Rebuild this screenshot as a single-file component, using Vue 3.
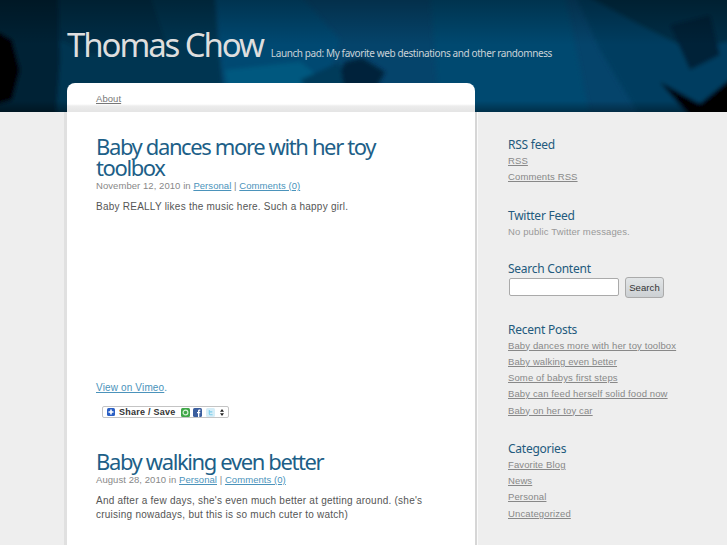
<template>
  <div class="page">
    <header class="masthead">
      <svg class="masthead-art" viewBox="0 0 727 112" preserveAspectRatio="none" aria-hidden="true">
        <defs>
          <linearGradient id="shade" x1="0" y1="0" x2="0" y2="1">
            <stop offset="0" stop-color="#000" stop-opacity="0.3" />
            <stop offset="0.4" stop-color="#000" stop-opacity="0" />
            <stop offset="0.9" stop-color="#000" stop-opacity="0" />
            <stop offset="1" stop-color="#000" stop-opacity="0.35" />
          </linearGradient>
          <filter id="soft" x="-5%" y="-5%" width="110%" height="110%">
            <feGaussianBlur stdDeviation="2" />
          </filter>
        </defs>
        <rect width="727" height="112" fill="#05446b" />
        <g filter="url(#soft)">
          <polygon points="-5,-5 215,-5 218,40 225,112 -5,117" fill="#043451" />
          <polygon points="55,-5 150,-5 165,40 90,55 60,40" fill="#032d47" />
          <polygon points="-5,-5 58,-5 60,60 56,117 -5,117" fill="#022335" />
          <polygon points="-5,30 12,40 20,70 12,100 -5,105" fill="#000" />
          <polygon points="215,-5 300,-5 340,40 325,85 225,90" fill="#054a72" />
          <polygon points="225,70 300,62 330,85 300,100 230,100" fill="#06587f" />
          <polygon points="345,62 362,58 385,72 372,95 340,112 330,90" fill="#02223a" />
          <polygon points="300,80 340,62 345,95 320,105" fill="#043a5a" />
          <polygon points="430,-5 565,-5 590,117 440,117" fill="#05486f" />
          <polygon points="575,-5 735,-5 735,117 640,117 600,50" fill="#043d60" />
          <polygon points="585,-5 735,-5 735,40 690,50 640,25" fill="#032d47" />
          <polygon points="670,25 710,15 720,55 690,70" fill="#032438" />
          <polygon points="660,82 700,104 735,85 735,117 690,117" fill="#000" />
          <polygon points="690,112 735,75 735,117" fill="#000" />
        </g>
        <rect width="727" height="112" fill="url(#shade)" />
      </svg>
      <div class="brand">
        <h1 class="site-name">Thomas Chow</h1>
        <span class="tagline">Launch pad: My favorite web destinations and other randomness</span>
      </div>
      <nav class="tabs">
        <a href="#" class="tab-link">About</a>
      </nav>
    </header>

    <div class="body-row">
      <main class="content">
        <article v-for="post in posts" :key="post.title" class="post">
          <h2 class="post-title">{{ post.title }}</h2>
          <p class="post-meta">
            {{ post.date }} in <a href="#">Personal</a> | <a href="#">Comments (0)</a>
          </p>
          <p class="post-text">{{ post.text }}</p>
          <template v-if="post.video">
            <div class="video-space"></div>
            <p class="vimeo"><a href="#">View on Vimeo</a>.</p>
            <div class="share">
              <svg class="share-plus" width="8" height="8" viewBox="0 0 8 8">
                <rect width="8" height="8" rx="1.500" fill="#2b5fc4" />
                <path d="M4 1.500v5M1.500 4h5" stroke="#fff" stroke-width="1.600" />
              </svg>
              <span class="share-label">Share / Save</span>
              <svg class="share-icon" width="9" height="9" viewBox="0 0 9 9">
                <rect width="9" height="9" rx="1.500" fill="#3fa648" />
                <circle cx="4.500" cy="4.500" r="2.400" fill="none" stroke="#d8f0d8" stroke-width="1.200" />
              </svg>
              <svg class="share-icon" width="9" height="9" viewBox="0 0 9 9">
                <rect width="9" height="9" rx="1.500" fill="#3b5e9e" />
                <path d="M5 9V5.200H4V4h1V3C5 2 5.600 1.500 6.400 1.500H7.400v1.200H6.800c-.4 0-.5.200-.5.500V4h1L7.100 5.200H6.300V9z" fill="#fff" />
              </svg>
              <svg class="share-icon" width="9" height="9" viewBox="0 0 9 9">
                <rect width="9" height="9" rx="1.500" fill="#d5edf7" />
                <path d="M3.300 2v3.400c0 .9.500 1.400 1.400 1.400H6.600M3.300 3.900h3" fill="none" stroke="#7fcdea" stroke-width="1.100" />
              </svg>
              <svg class="share-arrows" width="4" height="7" viewBox="0 0 4 7">
                <path d="M2 0L4 2.800H0zM2 7L0 4.200h4z" fill="#222" />
              </svg>
            </div>
          </template>
        </article>
      </main>

      <aside class="sidebar">
        <section class="widget">
          <h3>RSS feed</h3>
          <a href="#">RSS</a>
          <a href="#">Comments RSS</a>
        </section>
        <section class="widget">
          <h3>Twitter Feed</h3>
          <p>No public Twitter messages.</p>
        </section>
        <section class="widget">
          <h3>Search Content</h3>
          <form class="search" @submit.prevent>
            <input type="text" class="search-input" />
            <button class="search-button">Search</button>
          </form>
        </section>
        <section class="widget">
          <h3>Recent Posts</h3>
          <a v-for="item in recent" :key="item" href="#">{{ item }}</a>
        </section>
        <section class="widget">
          <h3>Categories</h3>
          <a v-for="item in categories" :key="item" href="#">{{ item }}</a>
        </section>
      </aside>
    </div>
  </div>
</template>

<script setup>
const posts = [
  {
    title: 'Baby dances more with her toy toolbox',
    date: 'November 12, 2010',
    text: 'Baby REALLY likes the music here. Such a happy girl.',
    video: true
  },
  {
    title: 'Baby walking even better',
    date: 'August 28, 2010',
    text: "And after a few days, she's even much better at getting around. (she's cruising nowadays, but this is so much cuter to watch)",
    video: false
  }
]

const recent = [
  'Baby dances more with her toy toolbox',
  'Baby walking even better',
  'Some of babys first steps',
  'Baby can feed herself solid food now',
  'Baby on her toy car'
]

const categories = ['Favorite Blog', 'News', 'Personal', 'Uncategorized']
</script>

<style>
html,
body {
  margin: 0;
  background: #eeeeee;
}
</style>

<style scoped>
.page {
  height: 545px;
  overflow: hidden;
  font-family: "Liberation Sans", Arial, sans-serif;
  font-size: 10px;
  color: #444;
}

.masthead {
  position: relative;
  height: 112px;
  display: flex;
  flex-direction: column;
  justify-content: flex-end;
  padding-left: 67px;
  box-sizing: border-box;
  overflow: hidden;
}

.masthead-art {
  position: absolute;
  inset: 0;
  width: 100%;
  height: 100%;
}

.brand {
  position: relative;
  display: flex;
  align-items: baseline;
  gap: 8px;
  margin-bottom: 15px;
}

.site-name {
  margin: 0;
  font-family: "Noto Sans", "Open Sans", sans-serif;
  font-size: 33px;
  font-weight: 400;
  line-height: 46px;
  letter-spacing: -2.100px;
  color: #dedede;
}

.tagline {
  font-family: "Noto Sans", "Open Sans", sans-serif;
  font-size: 10px;
  letter-spacing: -0.4px;
  color: #c9d2d8;
}

.tabs {
  position: relative;
  width: 408px;
  height: 29px;
  box-sizing: border-box;
  padding: 10px 0 0 29px;
  background: linear-gradient(#fff 0, #fff 21px, #ececec 23px, #e4e4e4 29px);
  border-radius: 8px 8px 0 0;
  font-size: 9.500px;
  line-height: 12px;
  letter-spacing: 0.06px;
}

.tab-link {
  color: #777;
}

.body-row {
  display: flex;
  align-items: flex-start;
  padding-left: 64px;
}

.content {
  width: 408px;
  min-height: 433px;
  background: #fff;
  border-left: 3px solid #e0e0e0;
  border-right: 2px solid #d6d6d6;
  box-shadow: 1px 0 0 #fafafa;
}

.post {
  padding: 0 29px;
}

.post:first-child {
  padding-top: 24px;
}

.post + .post {
  margin-top: 33px;
}

.post-title {
  margin: 0;
  font-family: "Noto Sans", "Open Sans", sans-serif;
  font-size: 22px;
  font-weight: 400;
  line-height: 21px;
  letter-spacing: -1.380px;
  color: #1d5f88;
}

.post-meta {
  margin: 1px 0 0;
  font-size: 9.500px;
  line-height: 14px;
  letter-spacing: 0.06px;
  color: #888;
}

.post-meta a,
.vimeo a {
  color: #4b93bb;
}

.post-text {
  margin: 7px 0 0;
  line-height: 14px;
  letter-spacing: 0.24px;
  color: #555;
}

.video-space {
  height: 166px;
}

.vimeo {
  margin: 0;
  line-height: 16px;
  letter-spacing: 0.15px;
  color: #4b93bb;
}

.share {
  display: flex;
  align-items: center;
  box-sizing: border-box;
  width: 127px;
  height: 12px;
  margin: 10px 0 0 6px;
  padding-left: 4px;
  background: #fff;
  border: 1px solid #c4c4c4;
  border-radius: 2px;
}

.share-label {
  margin-left: 4px;
  width: 58px;
  font-size: 9px;
  font-weight: 700;
  letter-spacing: 0.25px;
  white-space: nowrap;
  color: #333;
}

.share-icon {
  margin-left: 3.500px;
}

.share-plus {
  flex: none;
}

.share-arrows {
  margin-left: 5px;
}

.sidebar {
  width: 200px;
  padding: 25px 0 0 31px;
}

.widget {
  margin-bottom: 22px;
}

.widget h3 {
  margin: 0;
  font-family: "Noto Sans", "Open Sans", sans-serif;
  font-size: 12px;
  font-weight: 400;
  line-height: 16px;
  letter-spacing: -0.25px;
  color: #235a7d;
}

.widget a {
  display: block;
  font-size: 9.500px;
  line-height: 16.250px;
  letter-spacing: 0.12px;
  color: #888;
}

.widget p {
  margin: 0;
  font-size: 9.500px;
  line-height: 15px;
  letter-spacing: 0.12px;
  color: #999;
}

.search {
  display: flex;
  align-items: center;
  gap: 6px;
  margin-bottom: 24px;
  padding-left: 1px;
}

.search-input {
  width: 110px;
  height: 18px;
  padding: 0;
  box-sizing: border-box;
  background: #fff;
  border: 1px solid #aaa;
  border-radius: 2px;
}

.search-button {
  width: 39px;
  height: 21px;
  padding: 0;
  font-family: inherit;
  font-size: 9.500px;
  letter-spacing: 0.1px;
  color: #333;
  background: linear-gradient(#e2e5e7, #ccd0d3);
  border: 1px solid #aaa;
  border-radius: 3px;
}
</style>
